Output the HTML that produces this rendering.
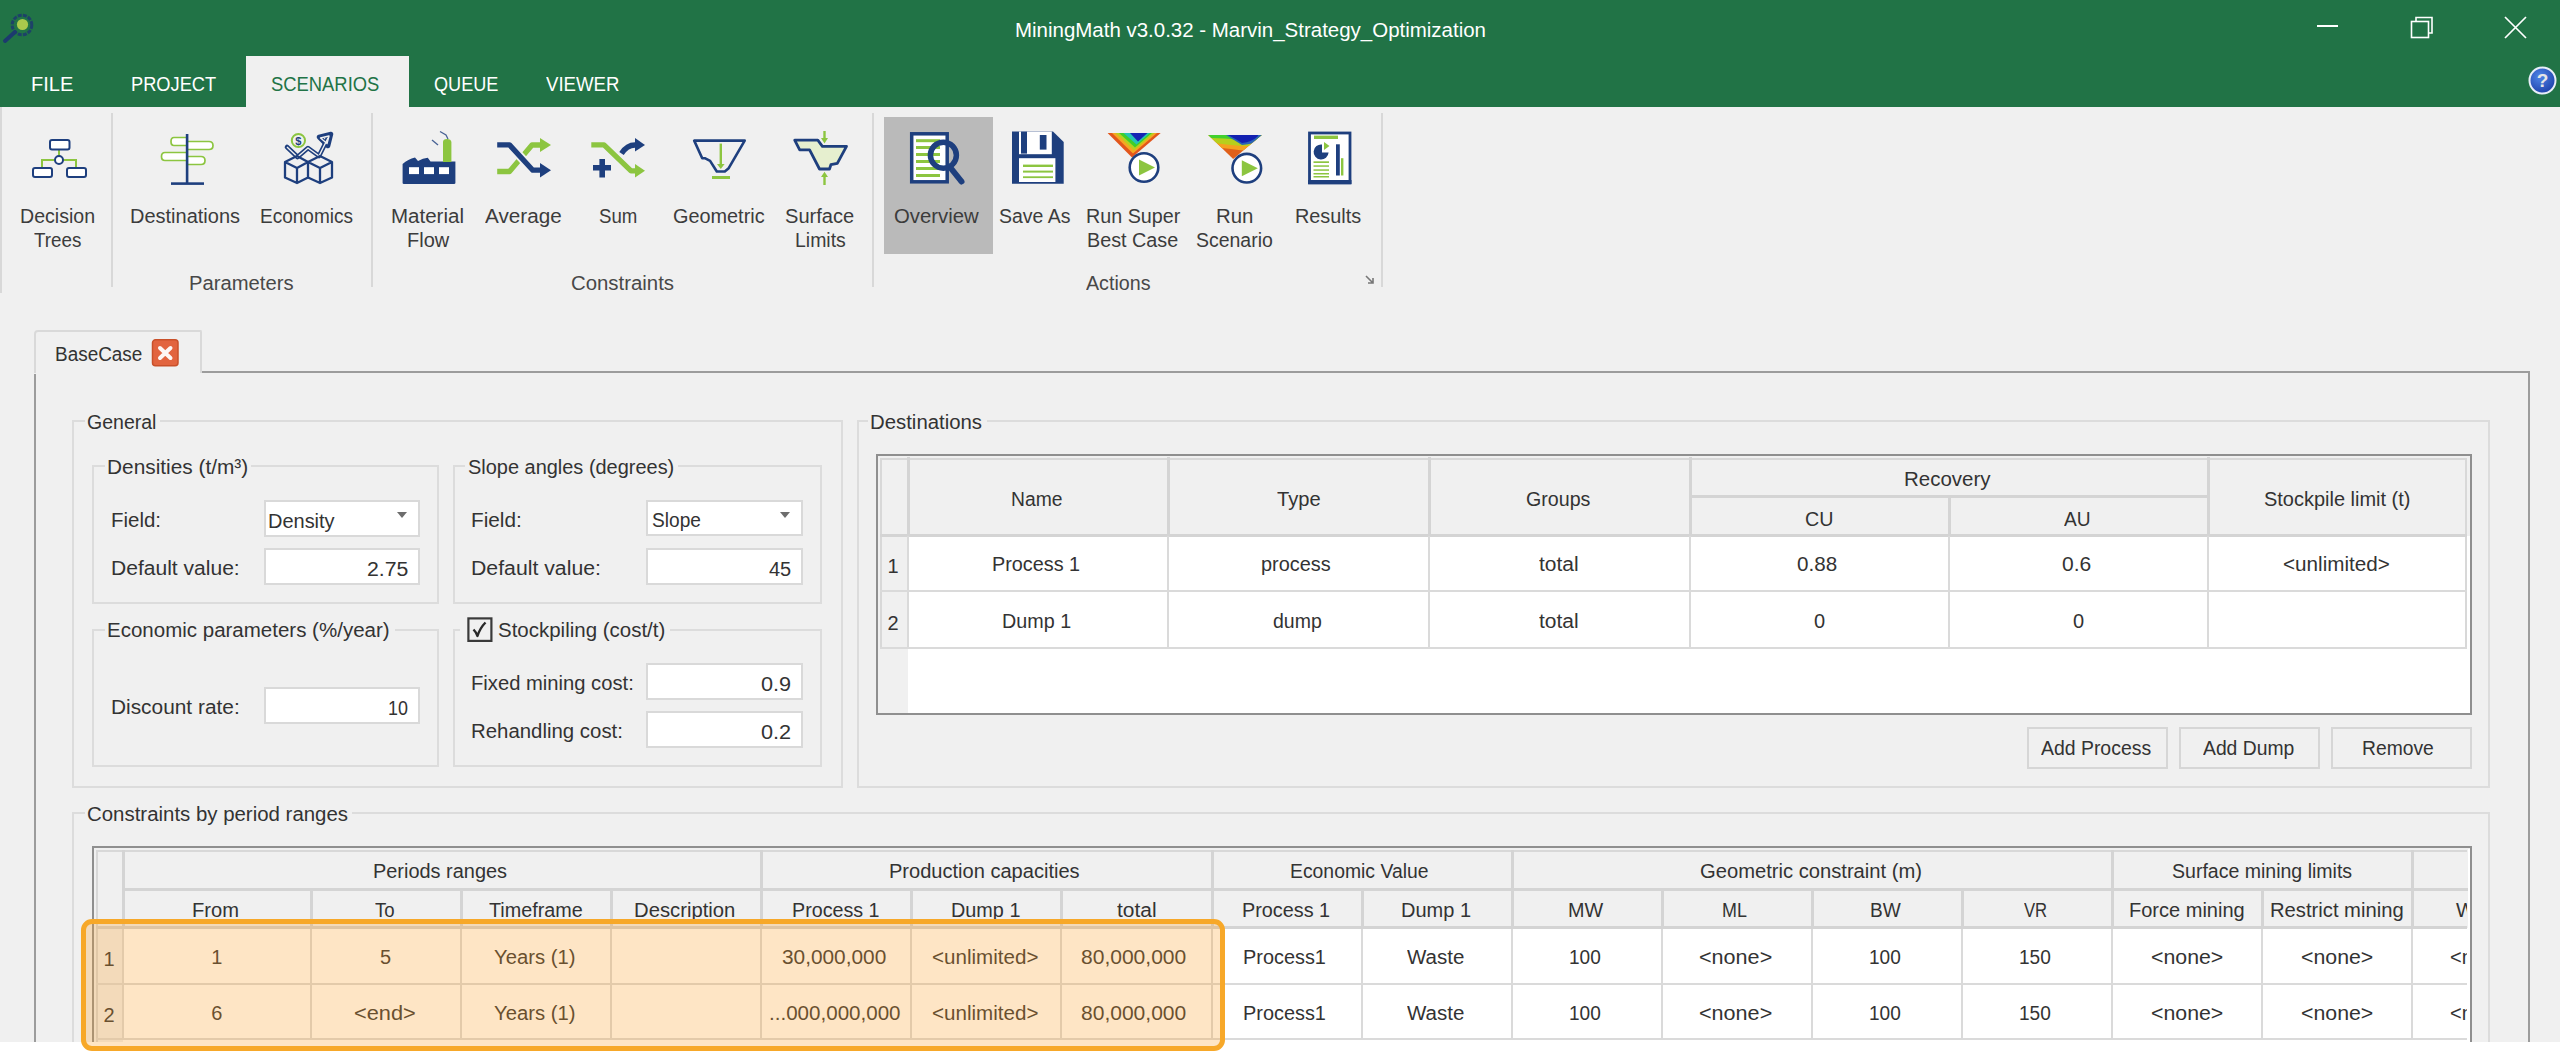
<!DOCTYPE html>
<html><head><meta charset="utf-8"><style>
html,body{margin:0;padding:0;}
body{width:2560px;height:1056px;position:relative;overflow:hidden;background:#fff;font-family:"Liberation Sans", sans-serif;}
.a{position:absolute;}
.t{position:absolute;line-height:24px;white-space:pre;font-family:"Liberation Sans", sans-serif;}
</style></head><body>
<div class="a" style="left:0px;top:0px;width:2560px;height:107px;background:#217346;"></div>
<svg class="a" style="left:0px;top:8px;" width="40" height="40" viewBox="0 0 40 40"><circle cx="22" cy="17" r="9.8" fill="none" stroke="#1c3a6e" stroke-width="3" stroke-dasharray="4 1.2" opacity="0.85"/>
<circle cx="22.5" cy="16.5" r="5.6" fill="#a9c94c"/>
<line x1="15" y1="24" x2="5" y2="33" stroke="#1c3a6e" stroke-width="4" stroke-linecap="round"/></svg>
<div class="t" style="left:1014.58px;top:18px;font-size:20px;color:#ffffff;transform-origin:0 0;transform:scaleX(1.0234);">MiningMath v3.0.32 - Marvin_Strategy_Optimization</div>
<div class="a" style="left:2317px;top:25px;width:21px;height:2px;background:#ffffff;"></div>
<svg class="a" style="left:2405px;top:12px;" width="34" height="32" viewBox="0 0 34 32"><rect x="6.5" y="9.5" width="17" height="16" fill="none" stroke="#fff" stroke-width="1.6"/>
<path d="M11 9 V5.5 H27 V21 H24" fill="none" stroke="#fff" stroke-width="1.6"/></svg>
<svg class="a" style="left:2500px;top:12px;" width="32" height="32" viewBox="0 0 32 32"><path d="M5 5 L26 26 M26 5 L5 26" stroke="#fff" stroke-width="1.7"/></svg>
<div class="a" style="left:246px;top:56px;width:163px;height:51px;background:#f0f0f0;"></div>
<div class="t" style="left:31.40px;top:72px;font-size:20px;color:#ffffff;transform-origin:0 0;transform:scaleX(1.0001);">FILE</div>
<div class="t" style="left:131.09px;top:72px;font-size:20px;color:#ffffff;transform-origin:0 0;transform:scaleX(0.9118);">PROJECT</div>
<div class="t" style="left:271.00px;top:72px;font-size:20px;color:#217346;transform-origin:0 0;transform:scaleX(0.9194);">SCENARIOS</div>
<div class="t" style="left:434.00px;top:72px;font-size:20px;color:#ffffff;transform-origin:0 0;transform:scaleX(0.9042);">QUEUE</div>
<div class="t" style="left:546.00px;top:72px;font-size:20px;color:#ffffff;transform-origin:0 0;transform:scaleX(0.9305);">VIEWER</div>
<svg class="a" style="left:2526px;top:64px;" width="34" height="34" viewBox="0 0 34 34"><defs><radialGradient id="hg" cx="0.4" cy="0.35" r="0.7"><stop offset="0" stop-color="#4f86e8"/><stop offset="1" stop-color="#1d3fa8"/></radialGradient></defs>
<circle cx="16.5" cy="16.5" r="13" fill="url(#hg)" stroke="#e8eef8" stroke-width="2"/>
<text x="16.5" y="23" font-family="Liberation Sans" font-weight="bold" font-size="19" fill="#e6e6e6" text-anchor="middle">?</text></svg>
<div class="a" style="left:0px;top:107px;width:2560px;height:186px;background:#f0f0f0;"></div>
<div class="a" style="left:0px;top:107px;width:2px;height:186px;background:#d8d8d8;"></div>
<div class="a" style="left:0px;top:293px;width:2560px;height:2px;background:#d6d6d6;"></div>
<div class="a" style="left:111px;top:113px;width:2px;height:174px;background:#d8d8d8;"></div>
<div class="a" style="left:371px;top:113px;width:2px;height:174px;background:#d8d8d8;"></div>
<div class="a" style="left:872px;top:113px;width:2px;height:174px;background:#d8d8d8;"></div>
<div class="a" style="left:1381px;top:113px;width:2px;height:174px;background:#d8d8d8;"></div>
<div class="a" style="left:884px;top:117px;width:109px;height:137px;background:#bababa;"></div>
<div class="t" style="left:20.02px;top:204px;font-size:20px;color:#3c3c3c;transform-origin:0 0;transform:scaleX(0.9789);">Decision</div>
<div class="t" style="left:34.00px;top:228px;font-size:20px;color:#3c3c3c;transform-origin:0 0;transform:scaleX(0.9408);">Trees</div>
<div class="t" style="left:130.00px;top:204px;font-size:20px;color:#3c3c3c;transform-origin:0 0;transform:scaleX(0.9995);">Destinations</div>
<div class="t" style="left:260.05px;top:204px;font-size:20px;color:#3c3c3c;transform-origin:0 0;transform:scaleX(0.9503);">Economics</div>
<div class="t" style="left:391.47px;top:204px;font-size:20px;color:#3c3c3c;transform-origin:0 0;transform:scaleX(1.0260);">Material</div>
<div class="t" style="left:406.70px;top:228px;font-size:20px;color:#3c3c3c;transform-origin:0 0;transform:scaleX(0.9980);">Flow</div>
<div class="t" style="left:485.00px;top:204px;font-size:20px;color:#3c3c3c;transform-origin:0 0;transform:scaleX(1.0337);">Average</div>
<div class="t" style="left:599.00px;top:204px;font-size:20px;color:#3c3c3c;transform-origin:0 0;transform:scaleX(0.9317);">Sum</div>
<div class="t" style="left:673.41px;top:204px;font-size:20px;color:#3c3c3c;transform-origin:0 0;transform:scaleX(0.9929);">Geometric</div>
<div class="t" style="left:785.00px;top:204px;font-size:20px;color:#3c3c3c;transform-origin:0 0;transform:scaleX(1.0029);">Surface</div>
<div class="t" style="left:794.73px;top:228px;font-size:20px;color:#3c3c3c;transform-origin:0 0;transform:scaleX(0.9722);">Limits</div>
<div class="t" style="left:894.40px;top:204px;font-size:20px;color:#3c3c3c;transform-origin:0 0;transform:scaleX(1.0166);">Overview</div>
<div class="t" style="left:999.40px;top:204px;font-size:20px;color:#3c3c3c;transform-origin:0 0;transform:scaleX(0.9734);">Save As</div>
<div class="t" style="left:1086.01px;top:204px;font-size:20px;color:#3c3c3c;transform-origin:0 0;transform:scaleX(0.9857);">Run Super</div>
<div class="t" style="left:1087.41px;top:228px;font-size:20px;color:#3c3c3c;transform-origin:0 0;transform:scaleX(0.9886);">Best Case</div>
<div class="t" style="left:1215.78px;top:204px;font-size:20px;color:#3c3c3c;transform-origin:0 0;transform:scaleX(1.0183);">Run</div>
<div class="t" style="left:1196.00px;top:228px;font-size:20px;color:#3c3c3c;transform-origin:0 0;transform:scaleX(0.9732);">Scenario</div>
<div class="t" style="left:1294.51px;top:204px;font-size:20px;color:#3c3c3c;transform-origin:0 0;transform:scaleX(0.9925);">Results</div>
<div class="t" style="left:188.99px;top:271px;font-size:20px;color:#484848;transform-origin:0 0;transform:scaleX(1.0110);">Parameters</div>
<div class="t" style="left:570.98px;top:271px;font-size:20px;color:#484848;transform-origin:0 0;transform:scaleX(1.0184);">Constraints</div>
<div class="t" style="left:1086.00px;top:271px;font-size:20px;color:#484848;transform-origin:0 0;transform:scaleX(0.9834);">Actions</div>
<svg class="a" style="left:1364px;top:274px;" width="12" height="12" viewBox="0 0 12 12"><path d="M2 2 L9 9 M9 4 V9 H4" stroke="#777" stroke-width="1.6" fill="none"/></svg>
<svg class="a" style="left:28px;top:134px;" width="62" height="48" viewBox="0 0 62 48"><g fill="none" stroke="#8cc540" stroke-width="2">
<path d="M31 15 V22"/><path d="M26.5 26 H14 V33"/><path d="M35 26 H48 V33"/></g>
<g fill="#fff" stroke="#1e3f7e" stroke-width="2">
<rect x="22" y="6" width="19.5" height="9.5" rx="2"/>
<circle cx="31" cy="26" r="4"/>
<rect x="5" y="34" width="19" height="9" rx="2"/>
<rect x="39" y="34" width="19" height="9" rx="2"/></g></svg>
<svg class="a" style="left:155px;top:130px;" width="64" height="58" viewBox="0 0 64 58"><g fill="#fff" stroke="#8cc540" stroke-width="1.7" stroke-linejoin="round">
<path d="M19 7.5 H32 V15.5 H19 Q16 15.5 16 11.5 Q16 7.5 19 7.5 Z"/>
<path d="M32 11.5 H54 Q58 11.5 58 15.5 Q58 19.5 54 19.5 H32 Z"/>
<path d="M10 22.5 H32 V30.5 H10 Q6.5 30.5 6.5 26.5 Q6.5 22.5 10 22.5 Z"/>
<path d="M32 26.5 H46 Q50 26.5 50 30.5 Q50 34.5 46 34.5 H32 Z"/></g>
<rect x="30.8" y="4" width="2.6" height="50" fill="#1e3f7e"/>
<rect x="16" y="52.3" width="33" height="2.6" fill="#1e3f7e"/></svg>
<svg class="a" style="left:276px;top:126px;" width="64" height="64" viewBox="0 0 64 64"><g fill="none" stroke="#1e3f7e" stroke-width="4.6" stroke-linejoin="round" stroke-linecap="round">
<path d="M11 21 L21.5 31 L32 22 L43 30 L52 12"/><path d="M43 11 L55 8 L52 20 Z"/></g>
<g fill="none" stroke="#f0f0f0" stroke-width="1.4" stroke-linejoin="round">
<path d="M11 21 L21.5 31 L32 22 L43 30 L52 12"/><path d="M44.5 12 L53 10 L51 17.5 Z"/></g>
<g fill="none" stroke="#1e3f7e" stroke-width="2.3" stroke-linejoin="round">
<path d="M9 36 L21 30 L32 36 L21 42 Z M9 36 V51.5 L21 57 L32 51.5 V36 M21 42 V57"/>
<path d="M32 36 L44 30 L56 36 L44 42 Z M56 36 V51.5 L44 57 L32 51.5 M44 42 V57"/></g>
<circle cx="22.4" cy="14.5" r="6.6" fill="#f0f0f0" stroke="#8cc540" stroke-width="2"/>
<text x="22.4" y="18.5" font-family="Liberation Sans" font-size="11" font-weight="bold" fill="#1e3f7e" text-anchor="middle">$</text></svg>
<svg class="a" style="left:398px;top:128px;" width="62" height="62" viewBox="0 0 62 62"><path d="M4.6 36 Q10 31 17 29.5 L20 33 Q25 30 29.8 29.8 L32.5 33.5 H57.4 V55 Q57.4 56.1 56 56.1 H6 Q4.6 56.1 4.6 55 Z" fill="#1e3f7e"/>
<path d="M45 14 Q45 11 49 11 Q53 11 53.4 14 V34 H45 Z" fill="#8cc540"/>
<g stroke="#1e3f7e" stroke-width="1.3" fill="none" opacity="0.8"><path d="M34 12 L40 17"/><path d="M42 3.5 L48 7 L50 11"/></g>
<g fill="#fff"><rect x="11" y="39.2" width="10" height="6.9"/><rect x="26" y="39.2" width="10" height="6.9"/><rect x="41" y="39.2" width="10" height="6.9"/></g></svg>
<svg class="a" style="left:494px;top:132px;" width="60" height="50" viewBox="0 0 60 50"><path d="M3.2 39.5 H15.5 L38 13 H47" fill="none" stroke="#8cc540" stroke-width="5.3" stroke-linejoin="round"/>
<path d="M46 6 L57 13 L46 20 Z" fill="#8cc540"/>
<path d="M15.5 12.9 L38.8 38.2" fill="none" stroke="#f0f0f0" stroke-width="9"/>
<path d="M3.2 12.9 H15.5 L38.8 38.2 H47" fill="none" stroke="#1e3f7e" stroke-width="5.3" stroke-linejoin="round"/>
<path d="M46 31 L57 38.2 L46 45.5 Z" fill="#1e3f7e"/></svg>
<svg class="a" style="left:589px;top:132px;" width="60" height="50" viewBox="0 0 60 50"><path d="M2.3 12.9 H15 L42 38.8 H48" fill="none" stroke="#8cc540" stroke-width="5.3" stroke-linejoin="round"/>
<path d="M46 32 L56 38.8 L46 45.5 Z" fill="#8cc540"/>
<path d="M32.5 21.5 Q38 13 46 13" fill="none" stroke="#1e3f7e" stroke-width="5.3"/>
<path d="M46 6 L56 13 L46 19.6 Z" fill="#1e3f7e"/>
<path d="M4 35.8 H22 M13.2 26.9 V45.5" stroke="#1e3f7e" stroke-width="5.6"/></svg>
<svg class="a" style="left:690px;top:132px;" width="60" height="56" viewBox="0 0 60 56"><path d="M4.2 8.6 H54.7 L38.7 36.2 L34.8 39.5 H26.8 L20.1 28.9 L14.8 26.2 H12.2 Z" fill="none" stroke="#1e3f7e" stroke-width="2.6" stroke-linejoin="round"/>
<path d="M30.8 11.6 V35" stroke="#8cc540" stroke-width="2.4"/>
<path d="M27 32 L30.8 37 L34.6 32 Z" fill="#8cc540"/>
<path d="M22 45.5 H40" stroke="#8cc540" stroke-width="3"/></svg>
<svg class="a" style="left:790px;top:128px;" width="62" height="62" viewBox="0 0 62 62"><path d="M4.7 12.2 H27.8 L32.4 18.3 H56.5 L47.3 35.3 L40.9 36.7 L39.5 41 H29.5 L19.6 21.8 H9.7 Z" fill="#e6efcf" stroke="#1e3f7e" stroke-width="2.8" stroke-linejoin="round"/>
<path d="M34.5 3 V12" stroke="#8cc540" stroke-width="2.4"/><path d="M31 10 L34.5 15.5 L38 10 Z" fill="#8cc540"/>
<path d="M34.5 48 V57" stroke="#8cc540" stroke-width="2.4"/><path d="M31 49 L34.5 43.8 L38 49 Z" fill="#8cc540"/></svg>
<svg class="a" style="left:906px;top:128px;" width="62" height="60" viewBox="0 0 62 60"><rect x="5.7" y="5.8" width="35.5" height="48" fill="#fff" stroke="#1e3f7e" stroke-width="3.5"/>
<g fill="#8cc540"><rect x="10" y="11.2" width="24" height="3"/><rect x="10" y="18" width="24" height="3"/><rect x="10" y="25" width="24" height="3"/><rect x="10" y="32" width="24" height="3"/><rect x="10" y="39" width="24" height="3"/><rect x="10" y="46" width="24" height="3"/></g>
<circle cx="37.4" cy="27.2" r="13" fill="none" stroke="#1e3f7e" stroke-width="5.5"/>
<path d="M45.5 41 L55.5 53.5" stroke="#1e3f7e" stroke-width="6" stroke-linecap="round"/></svg>
<svg class="a" style="left:1008px;top:128px;" width="60" height="60" viewBox="0 0 60 60"><path d="M4 3.6 H45 L55.7 14 V55.8 H4 Z" fill="#1e3f7e"/>
<rect x="11" y="3.6" width="32.8" height="22.6" fill="#fff"/>
<rect x="13" y="3.6" width="6" height="22" fill="#1e3f7e"/><rect x="31.8" y="7" width="6.7" height="14.6" fill="#1e3f7e"/>
<rect x="11" y="30.2" width="36.4" height="23.8" fill="#fff"/>
<g fill="#8cc540"><rect x="15" y="36.6" width="30" height="2.4"/><rect x="15" y="42.6" width="30" height="2"/><rect x="15" y="48.3" width="30" height="1.8"/></g></svg>
<svg class="a" style="left:1106px;top:128px;" width="60" height="60" viewBox="0 0 60 60"><path d="M1.6 5 H54.7 L26 29.5 Z" fill="#e2561c"/>
<path d="M6 5 H51 L27 25.5 Z" fill="#f6a623"/><path d="M9.5 5 H48.5 L28 22.5 Z" fill="#b9cf1e"/>
<path d="M13 5 H46 L29 19.5 Z" fill="#3fcf2a"/><path d="M17.5 5 H44 L30.5 16.5 Z" fill="#25c4b5"/><path d="M24 5 H41.5 L32 13.6 Z" fill="#1624b4"/><circle cx="38" cy="39.5" r="14.3" fill="#fff" stroke="#1e3f7e" stroke-width="2.6"/>
<path d="M33 31.5 L49 39.5 L33 47.5 Z" fill="#8cc540"/></svg>
<svg class="a" style="left:1206px;top:128px;" width="60" height="60" viewBox="0 0 60 60"><clipPath id="vclip"><path d="M2.3 7 H55.7 L27.2 30.9 Z"/></clipPath>
<g clip-path="url(#vclip)"><rect x="0" y="0" width="60" height="40" fill="#e0601a"/>
<path d="M0 0 H60 V22 Q40 24 25 21 Q10 19 0 20 Z" fill="#f4a21f"/>
<path d="M0 0 H60 V17 Q40 19 25 17 Q10 15 0 15 Z" fill="#b7cf1c"/>
<path d="M0 0 H60 V13 Q40 14 25 11 Q10 10 0 10 Z" fill="#42d02e"/>
<path d="M20 0 H60 V8 Q52 16 36 17 Q28 12 20 7 Z" fill="#2a62b8"/>
<path d="M22 0 H52 V8 Q46 14 36 15 Q28 10 22 7 Z" fill="#1220b0"/></g><circle cx="40.8" cy="40.2" r="14.3" fill="#fff" stroke="#1e3f7e" stroke-width="2.6"/>
<path d="M35.8 32.2 L51.8 40.2 L35.8 48.2 Z" fill="#8cc540"/></svg>
<svg class="a" style="left:1304px;top:128px;" width="52" height="60" viewBox="0 0 52 60"><rect x="5.5" y="5" width="40.5" height="50" fill="#fff" stroke="#1e3f7e" stroke-width="2.8"/>
<rect x="4" y="52" width="43.5" height="4" fill="#1e3f7e"/>
<rect x="10" y="7.6" width="24" height="3.4" fill="#8cc540"/>
<path d="M18 16.5 A7.5 7.5 0 1 0 24.6 24.5 H18 Z" fill="#1e3f7e"/>
<path d="M20 14 L25.5 18 L20 22 Z" fill="#8cc540"/>
<rect x="32" y="16.3" width="3.8" height="31.2" fill="#1e3f7e"/><rect x="37" y="30.2" width="2.4" height="17.3" fill="#8cc540"/>
<g fill="#8cc540"><rect x="9.5" y="33.3" width="15.5" height="1.7"/><rect x="9.5" y="37.3" width="15.5" height="1.5"/><rect x="9.5" y="41.3" width="15.5" height="1.5"/><rect x="9.5" y="45" width="15.5" height="1.5"/><rect x="9.5" y="48" width="15.5" height="1.5"/></g></svg>
<div class="a" style="left:0px;top:293px;width:2560px;height:749px;background:#f0f0f0;"></div>
<div class="a" style="left:0px;top:1042px;width:2560px;height:14px;background:#ffffff;"></div>
<div class="a" style="left:34px;top:330px;width:168px;height:43px;border:2px solid #d9d9d9;border-bottom:none;box-sizing:border-box;background:#f0f0f0;border-radius:4px 2px 0 0"></div>
<div class="t" style="left:54.75px;top:342px;font-size:20px;color:#333333;transform-origin:0 0;transform:scaleX(0.9468);">BaseCase</div>
<svg class="a" style="left:150px;top:338px;" width="30" height="30" viewBox="0 0 30 30"><rect x="2.5" y="1.8" width="25.5" height="26" rx="3" fill="#e2643f" stroke="#c9502a" stroke-width="1.5"/>
<path d="M10 10 L20.5 20 M20.5 10 L10 20" stroke="#fff" stroke-width="4" stroke-linecap="round" opacity="0.95"/></svg>
<div class="a" style="left:202px;top:371px;width:2328px;height:2px;background:#9c9c9c;"></div>
<div class="a" style="left:34px;top:374px;width:2px;height:668px;background:#9c9c9c;"></div>
<div class="a" style="left:2528px;top:371px;width:2px;height:671px;background:#9c9c9c;"></div>
<div class="a" style="left:72px;top:420px;width:771px;height:2px;background:#dcdcdc;"></div>
<div class="a" style="left:72px;top:420px;width:2px;height:368px;background:#dcdcdc;"></div>
<div class="a" style="left:841px;top:420px;width:2px;height:368px;background:#dcdcdc;"></div>
<div class="a" style="left:72px;top:786px;width:771px;height:2px;background:#dcdcdc;"></div>
<div class="a" style="left:85px;top:417px;width:75px;height:7px;background:#f0f0f0;"></div>
<div class="t" style="left:87.02px;top:410px;font-size:20px;color:#333333;transform-origin:0 0;transform:scaleX(0.9755);">General</div>
<div class="a" style="left:92px;top:465px;width:347px;height:2px;background:#dcdcdc;"></div>
<div class="a" style="left:92px;top:465px;width:2px;height:139px;background:#dcdcdc;"></div>
<div class="a" style="left:437px;top:465px;width:2px;height:139px;background:#dcdcdc;"></div>
<div class="a" style="left:92px;top:602px;width:347px;height:2px;background:#dcdcdc;"></div>
<div class="a" style="left:105px;top:462px;width:146px;height:7px;background:#f0f0f0;"></div>
<div class="t" style="left:106.96px;top:455px;font-size:20px;color:#333333;transform-origin:0 0;transform:scaleX(1.0418);">Densities (t/m³)</div>
<div class="a" style="left:453px;top:465px;width:369px;height:2px;background:#dcdcdc;"></div>
<div class="a" style="left:453px;top:465px;width:2px;height:139px;background:#dcdcdc;"></div>
<div class="a" style="left:820px;top:465px;width:2px;height:139px;background:#dcdcdc;"></div>
<div class="a" style="left:453px;top:602px;width:369px;height:2px;background:#dcdcdc;"></div>
<div class="a" style="left:465px;top:462px;width:213px;height:7px;background:#f0f0f0;"></div>
<div class="t" style="left:468.20px;top:455px;font-size:20px;color:#333333;transform-origin:0 0;transform:scaleX(0.9974);">Slope angles (degrees)</div>
<div class="a" style="left:92px;top:629px;width:347px;height:2px;background:#dcdcdc;"></div>
<div class="a" style="left:92px;top:629px;width:2px;height:138px;background:#dcdcdc;"></div>
<div class="a" style="left:437px;top:629px;width:2px;height:138px;background:#dcdcdc;"></div>
<div class="a" style="left:92px;top:765px;width:347px;height:2px;background:#dcdcdc;"></div>
<div class="a" style="left:105px;top:626px;width:290px;height:7px;background:#f0f0f0;"></div>
<div class="t" style="left:107.27px;top:618px;font-size:20px;color:#333333;transform-origin:0 0;transform:scaleX(1.0252);">Economic parameters (%/year)</div>
<div class="a" style="left:453px;top:629px;width:369px;height:2px;background:#dcdcdc;"></div>
<div class="a" style="left:453px;top:629px;width:2px;height:138px;background:#dcdcdc;"></div>
<div class="a" style="left:820px;top:629px;width:2px;height:138px;background:#dcdcdc;"></div>
<div class="a" style="left:453px;top:765px;width:369px;height:2px;background:#dcdcdc;"></div>
<div class="a" style="left:460px;top:620px;width:210px;height:16px;background:#f0f0f0;"></div>
<svg class="a" style="left:466px;top:616px;" width="28" height="28" viewBox="0 0 28 28"><rect x="2.4" y="2.4" width="23" height="22.5" fill="none" stroke="#3a3a3a" stroke-width="2.2"/><path d="M7.5 13.5 Q10 16 11.5 20 Q14 12 19.5 6.5" fill="none" stroke="#2a2a2a" stroke-width="2.4" stroke-linejoin="round"/></svg>
<div class="t" style="left:498.00px;top:618px;font-size:20px;color:#333333;transform-origin:0 0;transform:scaleX(1.0238);">Stockpiling (cost/t)</div>
<div class="t" style="left:110.98px;top:508px;font-size:20px;color:#333333;transform-origin:0 0;transform:scaleX(1.0227);">Field:</div>
<div class="a" style="left:264px;top:500px;width:156px;height:37px;background:#fff;border:2px solid #d9d9d9;box-sizing:border-box"></div>
<div class="t" style="left:268.00px;top:509px;font-size:20px;color:#333333;transform-origin:0 0;transform:scaleX(0.9986);">Density</div>
<svg class="a" style="left:396px;top:510px;" width="14" height="10" viewBox="0 0 14 10"><path d="M1 2 H11 L6 8 Z" fill="#6d6d6d"/></svg>
<div class="t" style="left:110.95px;top:556px;font-size:20px;color:#333333;transform-origin:0 0;transform:scaleX(1.0523);">Default value:</div>
<div class="a" style="left:264px;top:548px;width:156px;height:37px;background:#fff;border:2px solid #d9d9d9;box-sizing:border-box"></div>
<div class="t" style="left:366.74px;top:557px;font-size:20px;color:#333333;transform-origin:0 0;transform:scaleX(1.0634);">2.75</div>
<div class="t" style="left:470.56px;top:508px;font-size:20px;color:#333333;transform-origin:0 0;transform:scaleX(1.0378);">Field:</div>
<div class="a" style="left:646px;top:500px;width:157px;height:36px;background:#fff;border:2px solid #d9d9d9;box-sizing:border-box"></div>
<div class="t" style="left:651.60px;top:508px;font-size:20px;color:#333333;transform-origin:0 0;transform:scaleX(0.9563);">Slope</div>
<svg class="a" style="left:779px;top:510px;" width="14" height="10" viewBox="0 0 14 10"><path d="M1 2 H11 L6 8 Z" fill="#6d6d6d"/></svg>
<div class="t" style="left:470.54px;top:556px;font-size:20px;color:#333333;transform-origin:0 0;transform:scaleX(1.0623);">Default value:</div>
<div class="a" style="left:646px;top:548px;width:157px;height:37px;background:#fff;border:2px solid #d9d9d9;box-sizing:border-box"></div>
<div class="t" style="left:768.60px;top:557px;font-size:20px;color:#333333;transform-origin:0 0;transform:scaleX(0.9990);">45</div>
<div class="t" style="left:110.96px;top:695px;font-size:20px;color:#333333;transform-origin:0 0;transform:scaleX(1.0428);">Discount rate:</div>
<div class="a" style="left:264px;top:687px;width:156px;height:37px;background:#fff;border:2px solid #d9d9d9;box-sizing:border-box"></div>
<div class="t" style="left:387.71px;top:696px;font-size:20px;color:#333333;transform-origin:0 0;transform:scaleX(0.8948);">10</div>
<div class="t" style="left:470.59px;top:671px;font-size:20px;color:#333333;transform-origin:0 0;transform:scaleX(1.0100);">Fixed mining cost:</div>
<div class="a" style="left:646px;top:663px;width:157px;height:37px;background:#fff;border:2px solid #d9d9d9;box-sizing:border-box"></div>
<div class="t" style="left:760.70px;top:672px;font-size:20px;color:#333333;transform-origin:0 0;transform:scaleX(1.0838);">0.9</div>
<div class="t" style="left:470.58px;top:719px;font-size:20px;color:#333333;transform-origin:0 0;transform:scaleX(1.0196);">Rehandling cost:</div>
<div class="a" style="left:646px;top:711px;width:157px;height:37px;background:#fff;border:2px solid #d9d9d9;box-sizing:border-box"></div>
<div class="t" style="left:760.70px;top:720px;font-size:20px;color:#333333;transform-origin:0 0;transform:scaleX(1.0838);">0.2</div>
<div class="a" style="left:857px;top:420px;width:1633px;height:2px;background:#dcdcdc;"></div>
<div class="a" style="left:857px;top:420px;width:2px;height:368px;background:#dcdcdc;"></div>
<div class="a" style="left:2488px;top:420px;width:2px;height:368px;background:#dcdcdc;"></div>
<div class="a" style="left:857px;top:786px;width:1633px;height:2px;background:#dcdcdc;"></div>
<div class="a" style="left:868px;top:417px;width:119px;height:7px;background:#f0f0f0;"></div>
<div class="t" style="left:869.98px;top:410px;font-size:20px;color:#333333;transform-origin:0 0;transform:scaleX(1.0178);">Destinations</div>
<div class="a" style="left:876px;top:454px;width:1596px;height:261px;background:#ffffff;border:2px solid #8f8f8f;box-sizing:border-box;"></div>
<div class="a" style="left:878px;top:456px;width:1592px;height:80px;background:#f0f0f0;"></div>
<div class="a" style="left:878px;top:456px;width:30px;height:257px;background:#f0f0f0;"></div>
<div class="a" style="left:908px;top:536px;width:1560px;height:177px;background:#ffffff;"></div>
<div class="a" style="left:880px;top:458px;width:2px;height:191px;background:#d8d8d8;"></div>
<div class="a" style="left:880px;top:458px;width:1587px;height:2px;background:#d8d8d8;"></div>
<div class="a" style="left:2465px;top:458px;width:2px;height:191px;background:#d8d8d8;"></div>
<div class="a" style="left:907px;top:457px;width:3px;height:79px;background:#d4d4d4;"></div>
<div class="a" style="left:1167px;top:457px;width:3px;height:79px;background:#d4d4d4;"></div>
<div class="a" style="left:1428px;top:457px;width:3px;height:79px;background:#d4d4d4;"></div>
<div class="a" style="left:1689px;top:457px;width:3px;height:79px;background:#d4d4d4;"></div>
<div class="a" style="left:1948px;top:497px;width:3px;height:39px;background:#d4d4d4;"></div>
<div class="a" style="left:2207px;top:457px;width:3px;height:79px;background:#d4d4d4;"></div>
<div class="a" style="left:1690px;top:495px;width:518px;height:3px;background:#d4d4d4;"></div>
<div class="a" style="left:880px;top:534px;width:1587px;height:3px;background:#d4d4d4;"></div>
<div class="a" style="left:907px;top:536px;width:2px;height:113px;background:#dadada;"></div>
<div class="a" style="left:1167px;top:536px;width:2px;height:113px;background:#dadada;"></div>
<div class="a" style="left:1428px;top:536px;width:2px;height:113px;background:#dadada;"></div>
<div class="a" style="left:1689px;top:536px;width:2px;height:113px;background:#dadada;"></div>
<div class="a" style="left:1948px;top:536px;width:2px;height:113px;background:#dadada;"></div>
<div class="a" style="left:2207px;top:536px;width:2px;height:113px;background:#dadada;"></div>
<div class="a" style="left:880px;top:590px;width:1587px;height:2px;background:#dadada;"></div>
<div class="a" style="left:880px;top:647px;width:1587px;height:2px;background:#dadada;"></div>
<div class="t" style="left:1011.03px;top:487px;font-size:20px;color:#333333;transform-origin:0 0;transform:scaleX(0.9650);">Name</div>
<div class="t" style="left:1276.70px;top:487px;font-size:20px;color:#333333;transform-origin:0 0;transform:scaleX(1.0061);">Type</div>
<div class="t" style="left:1525.92px;top:487px;font-size:20px;color:#333333;transform-origin:0 0;transform:scaleX(0.9816);">Groups</div>
<div class="t" style="left:1904.18px;top:467px;font-size:20px;color:#333333;transform-origin:0 0;transform:scaleX(1.0231);">Recovery</div>
<div class="t" style="left:1805.22px;top:507px;font-size:20px;color:#333333;transform-origin:0 0;transform:scaleX(0.9832);">CU</div>
<div class="t" style="left:2064.30px;top:507px;font-size:20px;color:#333333;transform-origin:0 0;transform:scaleX(0.9567);">AU</div>
<div class="t" style="left:2264.30px;top:487px;font-size:20px;color:#333333;transform-origin:0 0;transform:scaleX(0.9984);">Stockpile limit (t)</div>
<div class="t" style="left:293px;width:1200px;text-align:center;top:554px;font-size:20px;color:#333333;">1</div>
<div class="t" style="left:992.01px;top:552px;font-size:20px;color:#333333;transform-origin:0 0;transform:scaleX(0.9909);">Process 1</div>
<div class="t" style="left:1261.40px;top:552px;font-size:20px;color:#333333;transform-origin:0 0;transform:scaleX(0.9952);">process</div>
<div class="t" style="left:1539.20px;top:552px;font-size:20px;color:#333333;transform-origin:0 0;transform:scaleX(1.0493);">total</div>
<div class="t" style="left:1797.20px;top:552px;font-size:20px;color:#333333;transform-origin:0 0;transform:scaleX(1.0309);">0.88</div>
<div class="t" style="left:2062.40px;top:552px;font-size:20px;color:#333333;transform-origin:0 0;transform:scaleX(1.0513);">0.6</div>
<div class="t" style="left:2283.20px;top:552px;font-size:20px;color:#333333;transform-origin:0 0;transform:scaleX(1.0329);">&lt;unlimited&gt;</div>
<div class="t" style="left:293px;width:1200px;text-align:center;top:611px;font-size:20px;color:#333333;">2</div>
<div class="t" style="left:1002.01px;top:609px;font-size:20px;color:#333333;transform-origin:0 0;transform:scaleX(0.9868);">Dump 1</div>
<div class="t" style="left:1272.80px;top:609px;font-size:20px;color:#333333;transform-origin:0 0;transform:scaleX(0.9738);">dump</div>
<div class="t" style="left:1539.20px;top:609px;font-size:20px;color:#333333;transform-origin:0 0;transform:scaleX(1.0493);">total</div>
<div class="t" style="left:1219.5px;width:1200px;text-align:center;top:609px;font-size:20px;color:#333333;">0</div>
<div class="t" style="left:1478.5px;width:1200px;text-align:center;top:609px;font-size:20px;color:#333333;">0</div>
<div class="t" style="left:1737.5px;width:1200px;text-align:center;top:609px;font-size:20px;color:#333333;"></div>
<div class="a" style="left:2027px;top:727px;width:141px;height:42px;background:#f0f0f0;border:2px solid #d6d6d6;box-sizing:border-box;"></div>
<div class="t" style="left:2041.40px;top:736px;font-size:20px;color:#333333;transform-origin:0 0;transform:scaleX(0.9710);">Add Process</div>
<div class="a" style="left:2179px;top:727px;width:141px;height:42px;background:#f0f0f0;border:2px solid #d6d6d6;box-sizing:border-box;"></div>
<div class="t" style="left:2203.20px;top:736px;font-size:20px;color:#333333;transform-origin:0 0;transform:scaleX(0.9654);">Add Dump</div>
<div class="a" style="left:2331px;top:727px;width:141px;height:42px;background:#f0f0f0;border:2px solid #d6d6d6;box-sizing:border-box;"></div>
<div class="t" style="left:2362.34px;top:736px;font-size:20px;color:#333333;transform-origin:0 0;transform:scaleX(0.9639);">Remove</div>
<div class="a" style="left:72px;top:812px;width:2418px;height:2px;background:#dcdcdc;"></div>
<div class="a" style="left:72px;top:812px;width:2px;height:248px;background:#dcdcdc;"></div>
<div class="a" style="left:2488px;top:812px;width:2px;height:248px;background:#dcdcdc;"></div>
<div class="a" style="left:85px;top:809px;width:267px;height:7px;background:#f0f0f0;"></div>
<div class="t" style="left:86.68px;top:802px;font-size:20px;color:#333333;transform-origin:0 0;transform:scaleX(1.0208);">Constraints by period ranges</div>
<div class="a" style="left:92px;top:846px;width:2380px;height:214px;background:#ffffff;border:2px solid #8f8f8f;box-sizing:border-box;"></div>
<div class="a" style="left:94px;top:848px;width:2376px;height:80px;background:#f0f0f0;"></div>
<div class="a" style="left:94px;top:848px;width:29px;height:212px;background:#f0f0f0;"></div>
<div class="a" style="left:96px;top:850px;width:2px;height:192px;background:#d8d8d8;"></div>
<div class="a" style="left:96px;top:850px;width:2371px;height:2px;background:#d8d8d8;"></div>
<div class="a" style="left:122px;top:850px;width:3px;height:78px;background:#d4d4d4;"></div>
<div class="a" style="left:122px;top:928px;width:2px;height:112px;background:#dadada;"></div>
<div class="a" style="left:310px;top:889px;width:3px;height:39px;background:#d4d4d4;"></div>
<div class="a" style="left:310px;top:928px;width:2px;height:112px;background:#dadada;"></div>
<div class="a" style="left:460px;top:889px;width:3px;height:39px;background:#d4d4d4;"></div>
<div class="a" style="left:460px;top:928px;width:2px;height:112px;background:#dadada;"></div>
<div class="a" style="left:610px;top:889px;width:3px;height:39px;background:#d4d4d4;"></div>
<div class="a" style="left:610px;top:928px;width:2px;height:112px;background:#dadada;"></div>
<div class="a" style="left:760px;top:850px;width:3px;height:78px;background:#d4d4d4;"></div>
<div class="a" style="left:760px;top:928px;width:2px;height:112px;background:#dadada;"></div>
<div class="a" style="left:910px;top:889px;width:3px;height:39px;background:#d4d4d4;"></div>
<div class="a" style="left:910px;top:928px;width:2px;height:112px;background:#dadada;"></div>
<div class="a" style="left:1060px;top:889px;width:3px;height:39px;background:#d4d4d4;"></div>
<div class="a" style="left:1060px;top:928px;width:2px;height:112px;background:#dadada;"></div>
<div class="a" style="left:1211px;top:850px;width:3px;height:78px;background:#d4d4d4;"></div>
<div class="a" style="left:1211px;top:928px;width:2px;height:112px;background:#dadada;"></div>
<div class="a" style="left:1361px;top:889px;width:3px;height:39px;background:#d4d4d4;"></div>
<div class="a" style="left:1361px;top:928px;width:2px;height:112px;background:#dadada;"></div>
<div class="a" style="left:1511px;top:850px;width:3px;height:78px;background:#d4d4d4;"></div>
<div class="a" style="left:1511px;top:928px;width:2px;height:112px;background:#dadada;"></div>
<div class="a" style="left:1661px;top:889px;width:3px;height:39px;background:#d4d4d4;"></div>
<div class="a" style="left:1661px;top:928px;width:2px;height:112px;background:#dadada;"></div>
<div class="a" style="left:1811px;top:889px;width:3px;height:39px;background:#d4d4d4;"></div>
<div class="a" style="left:1811px;top:928px;width:2px;height:112px;background:#dadada;"></div>
<div class="a" style="left:1961px;top:889px;width:3px;height:39px;background:#d4d4d4;"></div>
<div class="a" style="left:1961px;top:928px;width:2px;height:112px;background:#dadada;"></div>
<div class="a" style="left:2111px;top:850px;width:3px;height:78px;background:#d4d4d4;"></div>
<div class="a" style="left:2111px;top:928px;width:2px;height:112px;background:#dadada;"></div>
<div class="a" style="left:2261px;top:889px;width:3px;height:39px;background:#d4d4d4;"></div>
<div class="a" style="left:2261px;top:928px;width:2px;height:112px;background:#dadada;"></div>
<div class="a" style="left:2411px;top:850px;width:3px;height:78px;background:#d4d4d4;"></div>
<div class="a" style="left:2411px;top:928px;width:2px;height:112px;background:#dadada;"></div>
<div class="a" style="left:123px;top:888px;width:2345px;height:3px;background:#d4d4d4;"></div>
<div class="a" style="left:96px;top:926px;width:2371px;height:3px;background:#d4d4d4;"></div>
<div class="a" style="left:96px;top:983px;width:2371px;height:2px;background:#dadada;"></div>
<div class="a" style="left:96px;top:1038px;width:2371px;height:2px;background:#dadada;"></div>
<div class="t" style="left:373.00px;top:859px;font-size:20px;color:#333333;transform-origin:0 0;transform:scaleX(0.9961);">Periods ranges</div>
<div class="t" style="left:888.90px;top:859px;font-size:20px;color:#333333;transform-origin:0 0;transform:scaleX(1.0026);">Production capacities</div>
<div class="t" style="left:1290.03px;top:859px;font-size:20px;color:#333333;transform-origin:0 0;transform:scaleX(0.9682);">Economic Value</div>
<div class="t" style="left:1700.39px;top:859px;font-size:20px;color:#333333;transform-origin:0 0;transform:scaleX(1.0088);">Geometric constraint (m)</div>
<div class="t" style="left:2172.00px;top:859px;font-size:20px;color:#333333;transform-origin:0 0;transform:scaleX(0.9761);">Surface mining limits</div>
<div class="t" style="left:1840.0500000000002px;width:1200px;text-align:center;top:859px;font-size:20px;color:#333333;"></div>
<div class="t" style="left:192.49px;top:898px;font-size:20px;color:#333333;transform-origin:0 0;transform:scaleX(1.0067);">From</div>
<div class="t" style="left:-383.15px;width:1200px;text-align:center;top:945px;font-size:20px;color:#333333;">1</div>
<div class="t" style="left:-383.15px;width:1200px;text-align:center;top:1001px;font-size:20px;color:#333333;">6</div>
<div class="t" style="left:375.10px;top:898px;font-size:20px;color:#333333;transform-origin:0 0;transform:scaleX(0.9286);">To</div>
<div class="t" style="left:-214.35000000000002px;width:1200px;text-align:center;top:945px;font-size:20px;color:#333333;">5</div>
<div class="t" style="left:354.00px;top:1001px;font-size:20px;color:#333333;transform-origin:0 0;transform:scaleX(1.0883);">&lt;end&gt;</div>
<div class="t" style="left:488.70px;top:898px;font-size:20px;color:#333333;transform-origin:0 0;transform:scaleX(0.9894);">Timeframe</div>
<div class="t" style="left:493.80px;top:945px;font-size:20px;color:#333333;transform-origin:0 0;transform:scaleX(1.0132);">Years (1)</div>
<div class="t" style="left:493.80px;top:1001px;font-size:20px;color:#333333;transform-origin:0 0;transform:scaleX(1.0132);">Years (1)</div>
<div class="t" style="left:633.99px;top:898px;font-size:20px;color:#333333;transform-origin:0 0;transform:scaleX(1.0131);">Description</div>
<div class="t" style="left:85.79999999999995px;width:1200px;text-align:center;top:945px;font-size:20px;color:#333333;"></div>
<div class="t" style="left:85.79999999999995px;width:1200px;text-align:center;top:1001px;font-size:20px;color:#333333;"></div>
<div class="t" style="left:791.92px;top:898px;font-size:20px;color:#333333;transform-origin:0 0;transform:scaleX(0.9840);">Process 1</div>
<div class="t" style="left:781.60px;top:945px;font-size:20px;color:#333333;transform-origin:0 0;transform:scaleX(1.0413);">30,000,000</div>
<div class="t" style="left:769.37px;top:1001px;font-size:20px;color:#333333;transform-origin:0 0;transform:scaleX(1.0287);">...000,000,000</div>
<div class="t" style="left:951.01px;top:898px;font-size:20px;color:#333333;transform-origin:0 0;transform:scaleX(0.9912);">Dump 1</div>
<div class="t" style="left:932.20px;top:945px;font-size:20px;color:#333333;transform-origin:0 0;transform:scaleX(1.0290);">&lt;unlimited&gt;</div>
<div class="t" style="left:932.20px;top:1001px;font-size:20px;color:#333333;transform-origin:0 0;transform:scaleX(1.0290);">&lt;unlimited&gt;</div>
<div class="t" style="left:1117.30px;top:898px;font-size:20px;color:#333333;transform-origin:0 0;transform:scaleX(1.0466);">total</div>
<div class="t" style="left:1081.10px;top:945px;font-size:20px;color:#333333;transform-origin:0 0;transform:scaleX(1.0513);">80,000,000</div>
<div class="t" style="left:1081.10px;top:1001px;font-size:20px;color:#333333;transform-origin:0 0;transform:scaleX(1.0513);">80,000,000</div>
<div class="t" style="left:1242.21px;top:898px;font-size:20px;color:#333333;transform-origin:0 0;transform:scaleX(0.9909);">Process 1</div>
<div class="t" style="left:1243.21px;top:945px;font-size:20px;color:#333333;transform-origin:0 0;transform:scaleX(0.9946);">Process1</div>
<div class="t" style="left:1243.21px;top:1001px;font-size:20px;color:#333333;transform-origin:0 0;transform:scaleX(0.9946);">Process1</div>
<div class="t" style="left:1401.40px;top:898px;font-size:20px;color:#333333;transform-origin:0 0;transform:scaleX(0.9999);">Dump 1</div>
<div class="t" style="left:1406.90px;top:945px;font-size:20px;color:#333333;transform-origin:0 0;transform:scaleX(1.0266);">Waste</div>
<div class="t" style="left:1406.90px;top:1001px;font-size:20px;color:#333333;transform-origin:0 0;transform:scaleX(1.0266);">Waste</div>
<div class="t" style="left:1567.71px;top:898px;font-size:20px;color:#333333;transform-origin:0 0;transform:scaleX(0.9896);">MW</div>
<div class="t" style="left:1568.95px;top:945px;font-size:20px;color:#333333;transform-origin:0 0;transform:scaleX(0.9521);">100</div>
<div class="t" style="left:1568.95px;top:1001px;font-size:20px;color:#333333;transform-origin:0 0;transform:scaleX(0.9521);">100</div>
<div class="t" style="left:1722.40px;top:898px;font-size:20px;color:#333333;transform-origin:0 0;transform:scaleX(0.8965);">ML</div>
<div class="t" style="left:1699.40px;top:945px;font-size:20px;color:#333333;transform-origin:0 0;transform:scaleX(1.0793);">&lt;none&gt;</div>
<div class="t" style="left:1699.40px;top:1001px;font-size:20px;color:#333333;transform-origin:0 0;transform:scaleX(1.0793);">&lt;none&gt;</div>
<div class="t" style="left:1869.75px;top:898px;font-size:20px;color:#333333;transform-origin:0 0;transform:scaleX(0.9541);">BW</div>
<div class="t" style="left:1868.95px;top:945px;font-size:20px;color:#333333;transform-origin:0 0;transform:scaleX(0.9521);">100</div>
<div class="t" style="left:1868.95px;top:1001px;font-size:20px;color:#333333;transform-origin:0 0;transform:scaleX(0.9521);">100</div>
<div class="t" style="left:2024.00px;top:898px;font-size:20px;color:#333333;transform-origin:0 0;transform:scaleX(0.8339);">VR</div>
<div class="t" style="left:2019.04px;top:945px;font-size:20px;color:#333333;transform-origin:0 0;transform:scaleX(0.9552);">150</div>
<div class="t" style="left:2019.04px;top:1001px;font-size:20px;color:#333333;transform-origin:0 0;transform:scaleX(0.9552);">150</div>
<div class="t" style="left:2129.10px;top:898px;font-size:20px;color:#333333;transform-origin:0 0;transform:scaleX(1.0011);">Force mining</div>
<div class="t" style="left:2150.60px;top:945px;font-size:20px;color:#333333;transform-origin:0 0;transform:scaleX(1.0659);">&lt;none&gt;</div>
<div class="t" style="left:2150.60px;top:1001px;font-size:20px;color:#333333;transform-origin:0 0;transform:scaleX(1.0659);">&lt;none&gt;</div>
<div class="t" style="left:2270.29px;top:898px;font-size:20px;color:#333333;transform-origin:0 0;transform:scaleX(1.0105);">Restrict mining</div>
<div class="t" style="left:2300.60px;top:945px;font-size:20px;color:#333333;transform-origin:0 0;transform:scaleX(1.0659);">&lt;none&gt;</div>
<div class="t" style="left:2300.60px;top:1001px;font-size:20px;color:#333333;transform-origin:0 0;transform:scaleX(1.0659);">&lt;none&gt;</div>
<div class="a" style="left:2413px;top:895px;width:54px;height:140px;overflow:hidden">
<div class="t" style="left:43px;top:3px;font-size:20px;color:#333">W</div>
<div class="t" style="left:37px;top:50px;font-size:20px;color:#333">&lt;none&gt;</div>
<div class="t" style="left:37px;top:106px;font-size:20px;color:#333">&lt;none&gt;</div>
</div>
<div class="t" style="left:-491px;width:1200px;text-align:center;top:947px;font-size:20px;color:#333333;">1</div>
<div class="t" style="left:-491px;width:1200px;text-align:center;top:1003px;font-size:20px;color:#333333;">2</div>
<div class="a" style="left:2468px;top:849px;width:2px;height:193px;background:#ffffff;"></div>
<div class="a" style="left:0px;top:1042px;width:2560px;height:14px;background:#ffffff;"></div>
<div class="a" style="left:81px;top:919px;width:1144px;height:132px;border:5px solid #f7a829;border-radius:11px;box-sizing:border-box;background:rgba(250,160,40,0.27)"></div>
</body></html>
